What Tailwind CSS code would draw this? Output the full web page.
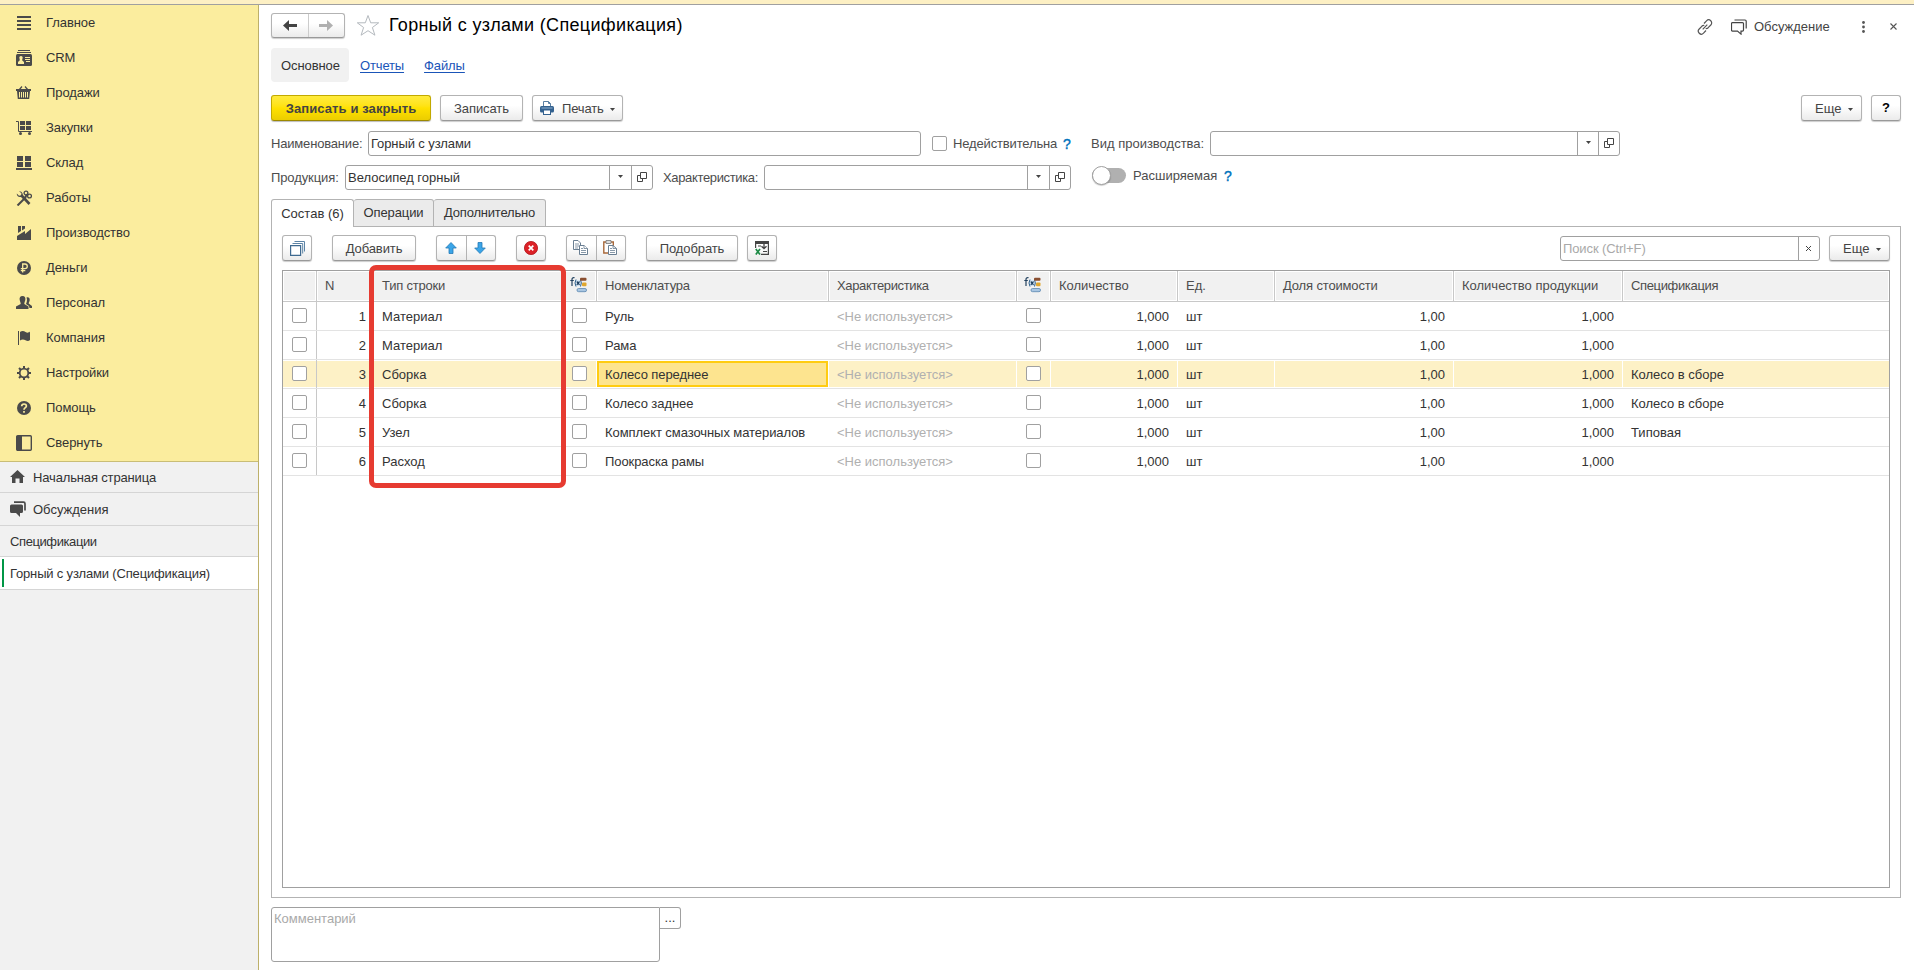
<!DOCTYPE html>
<html lang="ru">
<head>
    <meta charset="UTF-8">
    <meta name="viewport" content="width=device-width, initial-scale=1.0">
    <title>Горный с узлами (Спецификация)</title>
    <script src="https://cdn.jsdelivr.net/npm/@tailwindcss/browser@4"></script>
</head>
<body class="flex h-[970px] w-[1914px] flex-col overflow-hidden bg-white font-['Liberation_Sans',Arial,sans-serif] text-[13px] leading-4 text-[#333] whitespace-nowrap">
    <!-- Shared icons -->
    <svg class="hidden">
        <symbol id="caret" viewBox="0 0 5 3"><path d="M0 0h5L2.5 3z" fill="#444"/></symbol>
        <symbol id="open" viewBox="0 0 10 10"><path d="M3.5 .5h6v6h-6zM3 3.5H.5v6h5V7" fill="none" stroke="#444"/></symbol>
        <symbol id="formula" viewBox="0 0 17 16">
            <path d="M4.500 .7C2.700 .4 2 1 2 2.500v6.500M.3 3.500h3.500" fill="none" stroke="#24425f" stroke-width="1.200"/>
            <path d="M6 3h4.500v6H6z" fill="#d6e6f4"/>
            <path d="M6 2.500Q4 6 6 9.500M10.500 2.500q1.600 3.500 0 7" fill="none" stroke="#2b5e8c"/>
            <path d="M6.800 4.500l2.700 3.300M9.500 4.500L6.800 7.800" fill="none" stroke="#1d3f60" stroke-width="1.200"/>
            <rect x="10" y=".8" width="6.500" height="3" rx="1" fill="#8a4f30"/>
            <rect x="12" y="5.500" width="4.500" height="3.700" rx="1" fill="#dfa62e"/>
            <rect x="7" y="11.500" width="9.500" height="3.200" rx="1.500" fill="#a9c6e2" stroke="#5a86b0" stroke-width=".8"/>
        </symbol>
    </svg>

    <div class="h-[5px] shrink-0 border-b border-[#a0a0a0] bg-[#fdf0c4]"></div>

    <div class="flex min-h-0 flex-1">
        <!-- Sidebar -->
        <aside class="flex w-[259px] shrink-0 flex-col border-r border-[#bdb06a] bg-[#f1f1f1]">
            <nav class="flex h-[457px] shrink-0 flex-col border-b border-[#c9bd76] bg-[#fbed9e] fill-[#4a4a4a] pl-4 tracking-[-.08px] *:pt-px">
                <a class="flex h-[35px] items-center gap-[14px]"><svg class="size-4" viewBox="0 0 16 16"><path d="M1 1h14v2H1zM1 5h14v2H1zM1 9h14v2H1zM1 13h14v2H1z"/></svg><span>Главное</span></a>
                <a class="flex h-[35px] items-center gap-[14px]"><svg class="size-4" viewBox="0 0 16 16"><path d="M2 .5h12M1 2.500h14" stroke="#4a4a4a" stroke-width="1"/><rect y="4" width="16" height="12" rx="1.500"/><path d="M5 6a1.700 1.700 0 0 1 1.500 2.500l-.4 1.800L8 12v2H2v-2l1.800-1.700-.3-1.800A1.700 1.700 0 0 1 5 6zM9 7h5v1H9zM9 9h5v1H9zM10 11h4v1h-4z" fill="#fbed9e"/></svg><span>CRM</span></a>
                <a class="flex h-[35px] items-center gap-[14px]"><svg class="size-4" viewBox="0 0 16 16"><path d="M3 5l3-3.500M12 5L9 1.500" stroke="#4a4a4a" stroke-width="1.200"/><path d="M0 4h15v2h-1l-.8 8H1.800L1 6H0z"/><path d="M3.500 7v5.500M5.500 7v5.500M7.500 7v5.500M9.500 7v5.500M11.500 7v5.500" stroke="#fbed9e"/></svg><span>Продажи</span></a>
                <a class="flex h-[35px] items-center gap-[14px]"><svg class="size-4" viewBox="0 0 16 16"><path d="M0 1.500h2.500v10H16" fill="none" stroke="#4a4a4a"/><path d="M4 1h5v4H4zM10 1h5v4h-5zM4 6h5v4H4zM10 6h5v4h-5z"/><circle cx="4.500" cy="13.500" r="1.500"/><circle cx="13.500" cy="13.500" r="1.500"/></svg><span>Закупки</span></a>
                <a class="flex h-[35px] items-center gap-[14px]"><svg class="size-4" viewBox="0 0 16 16"><path d="M1 1h6v5H1zM9 1h6v5H9zM1 7h6v5H1zM9 7h6v5H9zM0 13h16v2H0z"/></svg><span>Склад</span></a>
                <a class="flex h-[35px] items-center gap-[14px]"><svg class="size-4" viewBox="0 0 16 16"><path d="M5.500 5.500l8 8.500" stroke="#4a4a4a" stroke-width="2.600"/><path d="M10 7l-8.500 8.500" stroke="#4a4a4a" stroke-width="2"/><path d="M3 1.200l2.500 2-.5 2-2 .5L.8 3.500C.5 6 3 8 6 6.500 8 4.500 6 1 3 1.200z"/><circle cx="10" cy="3" r="1.900" fill="none" stroke="#4a4a4a" stroke-width="1.300"/><circle cx="13.500" cy="6" r="1.900" fill="none" stroke="#4a4a4a" stroke-width="1.300"/><path d="M9 7l3-3" stroke="#4a4a4a" stroke-width="2"/></svg><span>Работы</span></a>
                <a class="flex h-[35px] items-center gap-[14px]"><svg class="size-4" viewBox="0 0 16 16"><path d="M1 15v-4l8-5v3L15 4v11z"/><path d="M2 8V1h3v5zM6 1h3v2.500L6 5.500z"/></svg><span>Производство</span></a>
                <a class="flex h-[35px] items-center gap-[14px]"><svg class="size-4" viewBox="0 0 16 16"><circle cx="8" cy="8" r="7"/><path d="M6.700 12.500v-8.500h2.300a2.200 2.200 0 0 1 0 4.600H4.800M4.800 10.600h4.500" fill="none" stroke="#fbed9e" stroke-width="1.300"/></svg><span>Деньги</span></a>
                <a class="flex h-[35px] items-center gap-[14px]"><svg class="size-4" viewBox="0 0 16 16"><path d="M6.500 1C9 1 9.700 3 9.300 5c-.3 1.600-1 2.300-1 4L12.500 11.500V14H0v-2.500L4.700 9c0-1.700-.7-2.400-1-4C3.300 3 4 1 6.500 1z"/><path d="M10.500 2.500c2-.8 3.500.7 3.200 2.700-.2 1.500-1 2-1 3.300L16 11v2h-2.500l-.5-2-3-2c.8-2 1.500-4 .5-6.500z"/></svg><span>Персонал</span></a>
                <a class="flex h-[35px] items-center gap-[14px]"><svg class="size-4" viewBox="0 0 16 16"><path d="M2 1h1v14H2zM4 2c2-1.500 4-1 5.500 0S13 3 14 1.500V10c-1.500 1.500-3 1-4.500.2S6 9 4 10.500z"/></svg><span>Компания</span></a>
                <a class="flex h-[35px] items-center gap-[14px]"><svg class="size-4" viewBox="0 0 16 16"><circle cx="8" cy="8" r="4.300" fill="none" stroke="#4a4a4a" stroke-width="1.800"/><path d="M8 1v3M8 12v3M1 8h3M12 8h3M3 3l2 2M11 11l2 2M13 3l-2 2M3 13l2-2" stroke="#4a4a4a" stroke-width="2"/></svg><span>Настройки</span></a>
                <a class="flex h-[35px] items-center gap-[14px]"><svg class="size-4" viewBox="0 0 16 16"><circle cx="8" cy="8" r="7"/><path d="M5.700 6.300c0-3 4.700-3 4.700-.3C10.400 7.700 8 7.500 8 9.700M8 10.900v1.800" fill="none" stroke="#fbed9e" stroke-width="1.700"/></svg><span>Помощь</span></a>
                <a class="flex h-[35px] items-center gap-[14px]"><svg class="size-4" viewBox="0 0 16 16"><rect x=".7" y=".7" width="14.600" height="14.600" rx="1" fill="none" stroke="#4a4a4a" stroke-width="1.400"/><path d="M1 1h5v14H1z"/></svg><span>Свернуть</span></a>
            </nav>

            <!-- Open windows -->
            <a class="flex h-[31px] shrink-0 items-center gap-2 border-b border-[#d5d5d5] pl-[10px] tracking-[-.15px]"><svg class="h-4 w-[15px]" viewBox="0 0 15 16"><path d="M7.500 1L15 8h-2v6H9.500V9.500h-4V14H2V8H0z" fill="#4a4a4a"/></svg><span class="pt-px">Начальная страница</span></a>
            <a class="flex h-[33px] shrink-0 items-center gap-[7px] border-b border-[#d5d5d5] pl-[10px]"><svg class="size-4" viewBox="0 0 16 16"><path d="M1.500 3.500h10A1.500 1.500 0 0 1 13 5v5.500a1.500 1.500 0 0 1-1.500 1.500H10v4l-4-4H1.500A1.500 1.500 0 0 1 0 10.500V5a1.500 1.500 0 0 1 1.500-1.500z" fill="#4a4a4a"/><path d="M4 1.200h9.500Q15 1.200 15 2.700v6.800" fill="none" stroke="#4a4a4a" stroke-width="1.700"/></svg><span class="pt-px">Обсуждения</span></a>
            <a class="flex h-[31px] shrink-0 items-center border-b border-[#d5d5d5] pt-px pl-[10px] tracking-[-.4px]">Спецификации</a>
            <a class="flex h-[33px] shrink-0 items-center border-b border-[#d5d5d5] bg-white pl-[2px] tracking-[-.17px]"><i class="mr-[6px] h-[28px] w-[2px] bg-[#009646]"></i><span class="pt-px">Горный с узлами (Спецификация)</span></a>
        </aside>

        <main class="flex min-w-0 flex-1 flex-col pr-[13px] pl-3">
            <!-- Title -->
            <header class="flex h-[43px] shrink-0 items-start pt-2">
                <div class="flex h-[25px] w-[74px] rounded-[3px] border border-[#b3b3b3] border-b-[#999] bg-linear-to-b from-white from-40% to-[#ebebeb] shadow-[0_1px_1px_#0003]">
                    <span class="flex flex-1 items-center justify-center border-r border-[#ccc]"><svg class="h-[11px] w-[14px]" viewBox="0 0 14 11"><path d="M0 5.500L6 0v4h8v3H6v4z" fill="#444"/></svg></span>
                    <span class="flex flex-1 items-center justify-center"><svg class="h-[11px] w-[14px]" viewBox="0 0 14 11"><path d="M14 5.500L8 0v4H0v3h8v4z" fill="#b0b0b0"/></svg></span>
                </div>
                <svg class="mt-[1px] ml-[11px] h-[23px] w-6" viewBox="0 0 24 23"><path d="M12 1.500l2.700 7.300h8L16.400 13.500l2.500 7.700L12 16.700l-6.900 4.500 2.500-7.700L1.300 8.800h8z" fill="none" stroke="#b4b9be"/></svg>
                <h1 class="ml-[9px] text-[18px] leading-[25px] tracking-[.33px] text-black">Горный с узлами (Спецификация)</h1>
                <div class="ml-auto flex h-[27px] items-center">
                    <svg class="size-4" viewBox="0 0 16 16" fill="none" stroke="#555" stroke-width="1.200"><path d="M7 4.500l2.500-2.700a2.900 2.900 0 0 1 4.300 4.200l-2.600 2.700a2.900 2.900 0 0 1-2.500.8M9 11.500l-2.500 2.700A2.900 2.900 0 0 1 2.200 10l2.600-2.700a2.900 2.900 0 0 1 2.500-.8M5.700 10.300l4.600-4.600"/></svg>
                    <svg class="ml-[18px] size-4" viewBox="0 0 16 16" fill="none" stroke="#444" stroke-width="1.200"><path d="M1.500 3.600h10q1 0 1 1v6.500q0 1-1 1H10v3l-3.500-3h-5q-1 0-1-1V4.600q0-1 1-1zM3.500 1h10.500q1.200 0 1.200 1.200V9.500"/></svg>
                    <span class="ml-[7px] w-[77px] text-[#444]">Обсуждение</span>
                    <svg class="ml-[31px] h-[12px] w-[3px]" viewBox="0 0 3 12" fill="#555"><circle cx="1.500" cy="1.500" r="1.400"/><circle cx="1.500" cy="6" r="1.400"/><circle cx="1.500" cy="10.500" r="1.400"/></svg>
                    <svg class="mr-1 ml-[25px] size-[7px]" viewBox="0 0 7 7"><path d="M.5 .5l6 6M6.500 .5l-6 6" stroke="#555" stroke-width="1.100"/></svg>
                </div>
            </header>

            <nav class="flex h-[34px] shrink-0 items-center">
                <span class="flex h-[34px] w-[78px] items-center justify-center rounded bg-[#f1f1f1] pt-px pl-px tracking-[-.1px]">Основное</span>
                <a class="ml-[11px] pt-px tracking-[-.15px] text-[#1a55b8] underline underline-offset-2">Отчеты</a>
                <a class="ml-[20px] pt-px tracking-[-.1px] text-[#1a55b8] underline underline-offset-2">Файлы</a>
            </nav>

            <!-- Form commands -->
            <div class="mt-[13px] flex h-[26px] shrink-0 text-[#444]">
                <button class="w-[160px] rounded-[3px] border border-[#c2a900] border-b-[#9c8800] bg-linear-to-b from-[#ffeb3b] via-[#ffe100] to-[#ebcd00] pt-px font-bold tracking-[.1px] shadow-[0_1px_1px_#0004]">Записать и закрыть</button>
                <button class="ml-[9px] w-[83px] rounded-[3px] border border-[#b3b3b3] border-b-[#999] bg-linear-to-b from-white from-40% to-[#ebebeb] pt-px tracking-[-.1px] shadow-[0_1px_1px_#0003]">Записать</button>
                <button class="ml-[9px] flex w-[91px] items-center rounded-[3px] border border-[#b3b3b3] border-b-[#999] bg-linear-to-b from-white from-40% to-[#ebebeb] pl-[7px] shadow-[0_1px_1px_#0003]">
                    <svg class="h-[14px] w-[14px]" viewBox="0 0 14 14"><path d="M3.500 5V.5h5l2 2V5" fill="#fff" stroke="#5a7fa3"/><path d="M8.500 .5v2h2" fill="none" stroke="#5a7fa3"/><rect y="5" width="14" height="6.500" rx="1.500" fill="#33618f"/><path d="M1.500 7h11" stroke="#8fb0cf"/><rect x="3.500" y="9" width="7" height="4.500" fill="#fff" stroke="#33618f"/></svg>
                    <span class="ml-[8px] pt-px tracking-[-.15px]">Печать</span><svg class="mt-[3px] ml-[6px] h-[3px] w-[5px]"><use href="#caret"/></svg>
                </button>
                <button class="ml-auto flex w-[61px] items-center rounded-[3px] border border-[#b3b3b3] border-b-[#999] bg-linear-to-b from-white from-40% to-[#ebebeb] pt-px pl-[13px] shadow-[0_1px_1px_#0003]">Еще<svg class="mt-[2px] ml-[7px] h-[3px] w-[5px]"><use href="#caret"/></svg></button>
                <button class="ml-[9px] w-[30px] rounded-[3px] border border-[#b3b3b3] border-b-[#999] bg-linear-to-b from-white from-40% to-[#ebebeb] font-bold text-black shadow-[0_1px_1px_#0003]">?</button>
            </div>

            <!-- Fields -->
            <div class="mt-[10px] flex h-[25px] shrink-0 items-center text-[#4d4d4d]">
                <label class="w-[97px] tracking-[-.18px]">Наименование:</label>
                <div class="flex h-[25px] w-[553px] items-center rounded-[3px] border border-[#a0a0a0] pl-[2px] tracking-[-.1px] text-[#333]">Горный с узлами</div>
                <i class="ml-[11px] size-[15px] rounded-[2px] border border-[#a0a0a0]"></i>
                <span class="ml-[6px] w-[110px] tracking-[-.15px]">Недействительна</span><span class="w-[28px] text-[14px] text-[#0072bc] [-webkit-text-stroke:.4px]">?</span>
                <label class="w-[119px]">Вид производства:</label>
                <div class="flex h-[25px] w-[410px] justify-end rounded-[3px] border border-[#a0a0a0]">
                    <span class="flex w-[21px] items-center justify-center border-l border-[#a0a0a0] pb-[2px]"><svg class="h-[3px] w-[5px]"><use href="#caret"/></svg></span>
                    <span class="flex w-[21px] items-center justify-center border-l border-[#a0a0a0] pb-px"><svg class="size-[10px]"><use href="#open"/></svg></span>
                </div>
            </div>
            <div class="mt-[9px] flex h-[25px] shrink-0 items-center text-[#4d4d4d]">
                <label class="w-[74px] tracking-[-.1px]">Продукция:</label>
                <div class="flex h-[25px] w-[308px] items-center rounded-[3px] border border-[#a0a0a0] pl-[2px] text-[#333]">
                    <span class="flex-1">Велосипед горный</span>
                    <span class="flex h-full w-[22px] items-center justify-center border-l border-[#a0a0a0] pb-[2px]"><svg class="h-[3px] w-[5px]"><use href="#caret"/></svg></span>
                    <span class="flex h-full w-[21px] items-center justify-center border-l border-[#a0a0a0] pb-px"><svg class="size-[10px]"><use href="#open"/></svg></span>
                </div>
                <label class="ml-[10px] w-[101px] tracking-[-.35px]">Характеристика:</label>
                <div class="flex h-[25px] w-[307px] justify-end rounded-[3px] border border-[#a0a0a0]">
                    <span class="flex w-[22px] items-center justify-center border-l border-[#a0a0a0] pb-[2px]"><svg class="h-[3px] w-[5px]"><use href="#caret"/></svg></span>
                    <span class="flex w-[21px] items-center justify-center border-l border-[#a0a0a0] pb-px"><svg class="size-[10px]"><use href="#open"/></svg></span>
                </div>
                <span class="ml-[21px] flex h-[15px] w-[34px] -translate-y-[2px] items-center rounded-full bg-[#b0b0b0]"><i class="size-[19px] shrink-0 rounded-full border border-[#a0a0a0] bg-white shadow-[0_1px_1px_#0003]"></i></span>
                <span class="ml-[7px] w-[91px] -translate-y-[2px]">Расширяемая</span><span class="-translate-y-[2px] text-[14px] text-[#0072bc] [-webkit-text-stroke:.4px]">?</span>
            </div>

            <!-- Tabs -->
            <div class="z-10 mt-[9px] -mb-px flex h-[28px] shrink-0">
                <span class="flex w-[83px] items-center justify-center rounded-t-[3px] border border-b-0 border-[#b3b3b3] bg-white">Состав (6)</span>
                <span class="flex w-[80px] items-center justify-center rounded-t-[3px] border border-l-0 border-[#b3b3b3] bg-[#ebebeb] tracking-[-.1px]">Операции</span>
                <span class="flex w-[112px] items-center justify-center rounded-t-[3px] border border-l-0 border-[#b3b3b3] bg-[#ebebeb] tracking-[-.2px]">Дополнительно</span>
            </div>
            <section class="flex h-[672px] w-[1630px] shrink-0 flex-col border border-[#b3b3b3] px-[10px] pt-2">
                <div class="flex h-[26px] shrink-0 text-[#444]">
                    <button class="flex w-[30px] items-center justify-center rounded-[3px] border border-[#b3b3b3] border-b-[#999] bg-linear-to-b from-white from-40% to-[#ebebeb] shadow-[0_1px_1px_#0003]"><svg class="size-[15px]" viewBox="0 0 15 15" fill="none" stroke="#5c84a6"><path d="M.6 4.600h10v9.800H.6z" stroke="#3f6a90" stroke-width="1.200" fill="#fff"/><path d="M2.500 2.500h10.200v10M4.500 .5h10v10"/></svg></button>
                    <button class="ml-5 w-[84px] rounded-[3px] border border-[#b3b3b3] border-b-[#999] bg-linear-to-b from-white from-40% to-[#ebebeb] pt-px tracking-[-.1px] shadow-[0_1px_1px_#0003]">Добавить</button>
                    <div class="ml-5 flex w-[60px] rounded-[3px] border border-[#b3b3b3] border-b-[#999] bg-linear-to-b from-white from-40% to-[#ebebeb] shadow-[0_1px_1px_#0003]">
                        <span class="flex w-[30px] items-center justify-center border-r border-[#b3b3b3] pr-[2px]"><svg class="h-3 w-[12px]" viewBox="0 0 12 12"><path d="M6 .5l5.300 5.500H8v5.500H4V6H.7z" fill="#3aa5e8" stroke="#2378b5" stroke-width=".8"/></svg></span>
                        <span class="flex flex-1 items-center justify-center pr-[3px]"><svg class="h-3 w-[12px]" viewBox="0 0 12 12"><path d="M6 11.500L.7 6H4V.5h4V6h3.300z" fill="#3aa5e8" stroke="#2378b5" stroke-width=".8"/></svg></span>
                    </div>
                    <button class="ml-5 flex w-[30px] items-center justify-center rounded-[3px] border border-[#b3b3b3] border-b-[#999] bg-linear-to-b from-white from-40% to-[#ebebeb] shadow-[0_1px_1px_#0003]"><svg class="size-[14px]" viewBox="0 0 14 14"><circle cx="7" cy="7" r="6.600" fill="#dc2127" stroke="#b0151b" stroke-width=".8"/><path d="M4.700 4.700l4.600 4.600M9.300 4.700L4.700 9.300" stroke="#fff" stroke-width="1.700"/></svg></button>
                    <div class="ml-5 flex w-[60px] rounded-[3px] border border-[#b3b3b3] border-b-[#999] bg-linear-to-b from-white from-40% to-[#ebebeb] shadow-[0_1px_1px_#0003]">
                        <span class="flex w-[30px] items-center justify-center border-r border-[#b3b3b3] pr-[2px] pb-px"><svg class="h-[15px] w-[15px]" viewBox="0 0 15 15" fill="#fff" stroke="#6a7f93"><path d="M.5 .5h4.500l2.500 2.500v6.500h-7z"/><path d="M2 4h4M2 6h4M2 8h3" stroke-width=".8"/><path d="M6.500 5.500h4.500l3.500 3v6h-8z"/><path d="M11 5.500V8.500h3.500M8 8.500h2M8 10.500h5M8 12.500h5" stroke-width=".8"/></svg></span>
                        <span class="flex flex-1 items-center justify-center pr-[2px] pb-px"><svg class="h-[15px] w-[14px]" viewBox="0 0 14 15"><path d="M.8 2h9.500v11H.8z" fill="#fff" stroke="#a8683a" stroke-width="1.400"/><path d="M3 .5h5v3H3z" fill="#ddd" stroke="#777" stroke-width=".8"/><path d="M5.500 5.500h4.500l3.500 3v6h-8z" fill="#fff" stroke="#6a7f93"/><path d="M10 5.500V8.500h3.500M7 8.500h2M7 10.500h5M7 12.500h5" fill="none" stroke="#6a7f93" stroke-width=".8"/></svg></span>
                    </div>
                    <button class="ml-5 w-[92px] rounded-[3px] border border-[#b3b3b3] border-b-[#999] bg-linear-to-b from-white from-40% to-[#ebebeb] pt-px tracking-[-.1px] shadow-[0_1px_1px_#0003]">Подобрать</button>
                    <button class="ml-[9px] flex w-[30px] items-center justify-center rounded-[3px] border border-[#b3b3b3] border-b-[#999] bg-linear-to-b from-white from-40% to-[#ebebeb] shadow-[0_1px_1px_#0003]"><svg class="h-[14px] w-[14px]" viewBox="0 0 14 14"><path d="M0 0h14v3H0z" fill="#444"/><path d="M.6 3v4M13.400 3v10.400H6M3 5h3M8 10.500h4" fill="none" stroke="#444" stroke-width="1.200"/><path d="M9 3v4M6.500 5.200L9 7.700l2.500-2.500" fill="none" stroke="#444" stroke-width="1.300"/><path d="M.8 8L5 13.500M5 8L.8 13.500" stroke="#1c8a45" stroke-width="1.700"/></svg></button>
                    <div class="mt-px ml-auto flex h-[25px] w-[260px] rounded-[3px] border border-[#a0a0a0]">
                        <span class="flex flex-1 items-center pl-[2px] tracking-[-.1px] text-[#a9a9a9]">Поиск (Ctrl+F)</span>
                        <span class="flex w-[21px] items-center justify-center border-l border-[#a0a0a0] pr-px pb-px"><svg class="size-[5px]" viewBox="0 0 5 5"><path d="M0 0l5 5M5 0L0 5" stroke="#444"/></svg></span>
                    </div>
                    <button class="ml-[9px] flex w-[61px] items-center rounded-[3px] border border-[#b3b3b3] border-b-[#999] bg-linear-to-b from-white from-40% to-[#ebebeb] pt-px pl-[13px] shadow-[0_1px_1px_#0003]">Еще<svg class="mt-[2px] ml-[7px] h-[3px] w-[5px]"><use href="#caret"/></svg></button>
                </div>

                <!-- Components table -->
                <div class="relative mt-[9px] h-[618px] w-[1608px] border border-[#a0a0a0]">
                    <div class="grid h-[31px] grid-cols-[34px_56px_190px_34px_232px_188px_34px_127px_97px_179px_169px_1fr] border-b border-[#c8c8c8] bg-white text-[#4d4d4d] *:flex *:items-center *:border-r *:border-[#c8c8c8] *:bg-[#f1f1f1] *:pl-2 *:shadow-[inset_0_0_0_1px_#fff] *:last:border-r-0">
                        <div></div>
                        <div>N</div>
                        <div><span class="ml-px tracking-[-.2px]">Тип строки</span></div>
                        <div><svg class="-mt-[2px] -ml-px h-4 w-[17px] shrink-0"><use href="#formula"/></svg></div>
                        <div class="tracking-[-.2px]">Номенклатура</div>
                        <div class="tracking-[-.35px]">Характеристика</div>
                        <div><svg class="-mt-[2px] -ml-px h-4 w-[17px] shrink-0"><use href="#formula"/></svg></div>
                        <div>Количество</div>
                        <div>Ед.</div>
                        <div class="tracking-[-.15px]">Доля стоимости</div>
                        <div>Количество продукции</div>
                        <div class="tracking-[-.35px]">Спецификация</div>
                    </div>
                    <div id="rows"></div>
                    <!-- Highlight frame over the row type column -->
                    <div class="absolute -top-[6px] left-[86px] h-[223px] w-[197px] rounded-[7px] border-[5px] border-[#e63b31]"></div>
                </div>
            </section>

            <div class="mt-[9px] flex shrink-0 items-start">
                <div class="h-[55px] w-[389px] rounded-[3px] rounded-tr-none border border-[#a0a0a0] pt-[3px] pl-[2px] text-[#a9a9a9]">Комментарий</div>
                <span class="flex h-[22px] w-[21px] items-center justify-center rounded-r-[3px] border border-l-0 border-[#a0a0a0]">...</span>
            </div>
        </main>
    </div>

    <script>
        const rows = [
            ['Материал', 'Руль', ''],
            ['Материал', 'Рама', ''],
            ['Сборка', 'Колесо переднее', 'Колесо в сборе'],
            ['Сборка', 'Колесо заднее', 'Колесо в сборе'],
            ['Узел', 'Комплект смазочных материалов', 'Типовая'],
            ['Расход', 'Поокраска рамы', '']
        ];
        const selected = 2;
        const checkbox = '<i class="-mt-px size-[15px] shrink-0 rounded-[2px] border border-[#a0a0a0] bg-white"></i>';

        document.getElementById('rows').innerHTML = rows.map(([type, item, spec], i) => {
            const on = i === selected;
            const bg = on ? 'bg-[#fdf1c6]' : 'bg-white';
            const itemCell = on ? 'border-2 border-[#fc1] bg-[#fde48f] pl-[6px]' : 'pl-2';
            return `
            <div class="grid h-[29px] grid-cols-[34px_56px_190px_34px_232px_188px_34px_127px_97px_179px_169px_1fr] border-b border-[#e3e3e3]">
                <div class="border-r border-[#c8c8c8] py-px"><div class="flex h-full items-center pl-[9px] ${bg}">${checkbox}</div></div>
                <div class="py-px"><div class="flex h-full items-center justify-end pt-px pr-[7px] ${bg}">${i + 1}</div></div>
                <div class="py-px"><div class="flex h-full items-center pt-px pl-[9px] ${bg}">${type}</div></div>
                <div class="py-px pr-px"><div class="flex h-full items-center pl-[9px] ${bg}">${checkbox}</div></div>
                <div class="py-px pr-px"><div class="flex h-full items-center pt-px tracking-[-.07px] ${itemCell}">${item}</div></div>
                <div class="py-px pr-px"><div class="flex h-full items-center pt-px pl-2 text-[#b0b0b0] ${bg}">&lt;Не используется&gt;</div></div>
                <div class="py-px pr-px"><div class="flex h-full items-center pl-[9px] ${bg}">${checkbox}</div></div>
                <div class="py-px pr-px"><div class="flex h-full items-center justify-end pt-px pr-2 ${bg}">1,000</div></div>
                <div class="py-px pr-px"><div class="flex h-full items-center pt-px pl-2 ${bg}">шт</div></div>
                <div class="py-px pr-px"><div class="flex h-full items-center justify-end pt-px pr-2 ${bg}">1,00</div></div>
                <div class="py-px pr-px"><div class="flex h-full items-center justify-end pt-px pr-2 ${bg}">1,000</div></div>
                <div class="py-px"><div class="flex h-full items-center pt-px pl-2 ${bg}">${spec}</div></div>
            </div>`;
        }).join('');
    </script>
</body>
</html>
